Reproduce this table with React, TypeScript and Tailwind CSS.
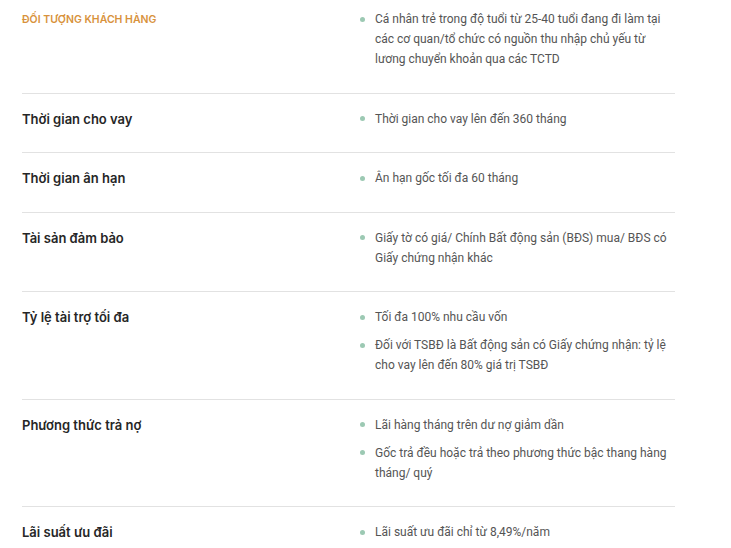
const rows: { label: string; items: string[]; header?: boolean }[] = [
  {
    label: "ĐỐI TƯỢNG KHÁCH HÀNG",
    header: true,
    items: [
      "Cá nhân trẻ trong độ tuổi từ 25-40 tuổi đang đi làm tại các cơ quan/tổ chức có nguồn thu nhập chủ yếu từ lương chuyển khoản qua các TCTD",
    ],
  },
  { label: "Thời gian cho vay", items: ["Thời gian cho vay lên đến 360 tháng"] },
  { label: "Thời gian ân hạn", items: ["Ân hạn gốc tối đa 60 tháng"] },
  {
    label: "Tài sản đảm bảo",
    items: ["Giấy tờ có giá/ Chính Bất động sản (BĐS) mua/ BĐS có Giấy chứng nhận khác"],
  },
  {
    label: "Tỷ lệ tài trợ tối đa",
    items: [
      "Tối đa 100% nhu cầu vốn",
      "Đối với TSBĐ là Bất động sản có Giấy chứng nhận: tỷ lệ cho vay lên đến 80% giá trị TSBĐ",
    ],
  },
  {
    label: "Phương thức trả nợ",
    items: [
      "Lãi hàng tháng trên dư nợ giảm dần",
      "Gốc trả đều hoặc trả theo phương thức bậc thang hàng tháng/ quý",
    ],
  },
  { label: "Lãi suất ưu đãi", items: ["Lãi suất ưu đãi chỉ từ 8,49%/năm"] },
];

const App = () => {
  return (
    <div className="w-[731px] h-[548px] overflow-hidden bg-white font-['Inter',sans-serif]">
      <div className="ml-[22px] w-[653px]">
        {rows.map((row, i) => (
          <div
            key={row.label}
            className={`flex ${i === 0 ? "pt-[9px]" : "pt-[15px]"} pb-[23.5px] ${
              i < rows.length - 1 ? "border-b border-[#e2e2e2]" : ""
            }`}
          >
            {row.header ? (
              <div className="mt-px w-[338px] shrink-0 text-[10.5px] leading-5 font-semibold uppercase text-[#d8923c]">
                {row.label}
              </div>
            ) : (
              <div className="w-[338px] shrink-0 text-[13px] leading-5 font-semibold text-[#262626]">
                {row.label}
              </div>
            )}
            <ul className="flex flex-col gap-2 pr-2">
              {row.items.map((item) => (
                <li key={item} className="flex text-[12px] leading-5 text-[#555] font-['Roboto',sans-serif]">
                  <span className="mt-[7.5px] mr-[10px] h-[5px] w-[5px] shrink-0 rounded-full bg-[#9cc9b3]" />
                  <span>{item}</span>
                </li>
              ))}
            </ul>
          </div>
        ))}
      </div>
    </div>
  );
};

export default App;
